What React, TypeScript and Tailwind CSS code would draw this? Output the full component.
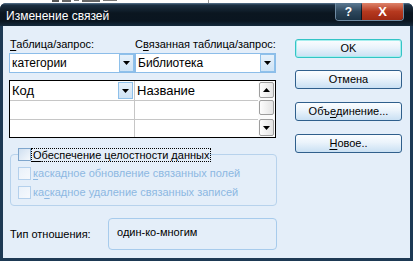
import React from 'react'

// ── small bits ──────────────────────────────────────────────────
const U: React.FC<{ children: React.ReactNode }> = ({ children }) => (
  <span className="underline underline-offset-[2px] decoration-[1px]">{children}</span>
)

const Tri: React.FC<{ up?: boolean }> = ({ up }) => (
  <svg width="7" height="4" viewBox="0 0 7 4">
    <path d={up ? 'M0 4h7L3.5 0z' : 'M0 0h7L3.5 4z'} fill="#000" />
  </svg>
)

const DropBtn: React.FC<{ className?: string }> = ({ className = '' }) => (
  <div className={`w-[15px] flex items-center justify-center bg-[linear-gradient(#e6f1fb,#cfe3f5)] border border-[#8ec0ea] ${className}`}>
    <Tri />
  </div>
)

const Combo: React.FC<{ text: string; w: string }> = ({ text, w }) => (
  <div className={`${w} h-[20px] flex bg-white border border-[#8cbde9]`}>
    <div className="flex-1 pl-[2px] text-[12px] leading-[18px]">{text}</div>
    <DropBtn />
  </div>
)

const Check: React.FC<{ disabled?: boolean }> = ({ disabled }) => (
  <div className={`w-[13px] h-[13px] shrink-0 border ${disabled
    ? 'border-[#b4d0ec] bg-[linear-gradient(135deg,#e9f1fa,#f6f9fd)]'
    : 'border-[#7fa6cd] bg-[linear-gradient(135deg,#cfdff0,#f4f8fc)]'}`} />
)

const DlgButton: React.FC<{ children: React.ReactNode; primary?: boolean; className?: string }> = ({ children, primary, className = '' }) => (
  <div className={`h-[19px] rounded-[3px] border flex items-center justify-center text-[11px] bg-[linear-gradient(#fbfdff,#eaf3fb_45%,#c9e0f3)]
    ${primary ? 'border-[#33c4c6] shadow-[inset_0_0_0_1px_#a6eeee]' : 'border-[#2f5f8c]'} ${className}`}>
    {children}
  </div>
)

const ScrollBtn: React.FC<{ children?: React.ReactNode; className?: string }> = ({ children, className = '' }) => (
  <div className={`w-[15px] flex items-center justify-center rounded-[2px] border border-[#9e9e9e] bg-[linear-gradient(90deg,#fdfdfd,#e4e4e4)] ${className}`}>
    {children}
  </div>
)

// ── dialog ──────────────────────────────────────────────────────
export default function App() {
  return (
    <div className="w-[413px] h-[261px] overflow-hidden bg-white text-black font-['Liberation_Sans',Arial,sans-serif]">
      {/* bits of the window behind, peeking above */}
      <div className="h-[3px] flex items-start gap-[3px] pl-[52px]">
        <div className="w-[7px] h-[2px] bg-[#555]" />
        <div className="w-[9px] h-[2px] bg-[#666]" />
        <div className="w-[5px] h-[1px] bg-[#777]" />
        <div className="w-[18px] h-[2px] bg-[#666]" />
        <div className="w-[14px] h-[1px] bg-[#777]" />
        <div className="ml-[88px] w-[1px] h-[3px] bg-[#999]" />
      </div>

      <div className="h-[258px] flex flex-col rounded-t-[6px] bg-[#1d3954]">
        {/* title bar */}
        <div className="h-[23px] flex items-start justify-between rounded-t-[6px] bg-[linear-gradient(#5b7893_0px,#1c3043_2px,#0b1620_10px,#0a1520_18px,#152a3c)]">
          <div className="pl-[6px] pt-[7px] text-[12px] leading-[13px] text-white">Изменение связей</div>
          <div className="mr-[9px] flex gap-[1px] rounded-b-[4px] border border-t-0 border-[#6f8ba3]">
            <div className="w-[25px] h-[17px] flex items-center justify-center rounded-bl-[3px] bg-[linear-gradient(#5c7a93,#2d475c_50%,#1c3447)] text-white font-bold text-[12px] leading-none">?</div>
            <div className="w-[41px] h-[17px] flex items-center justify-center rounded-br-[3px] bg-[linear-gradient(#de836a,#b6391f_50%,#9f2913)] text-white font-bold text-[13px] leading-none">X</div>
          </div>
        </div>

        {/* client area */}
        <div className="flex-1 mx-[3px] mb-[3px] bg-[#e4eef9] flex pl-[6px] pr-[8px]">
          {/* left column */}
          <div className="w-[268px] flex flex-col pt-[12px]">
            <div className="flex text-[11px] leading-[13px]">
              <div className="w-[126px] pl-[1px]"><U>Т</U>аблица/запрос:</div>
              <div>С<U>в</U>язанная таблица/запрос:</div>
            </div>

            <div className="flex mt-[2px]">
              <Combo text="категории" w="w-[126px]" />
              <Combo text="Библиотека" w="w-[141px]" />
            </div>

            {/* field grid */}
            <div className="mt-[7px] w-[267px] h-[58px] border border-black bg-white flex">
              <div className="flex-1 flex flex-col">
                <div className="h-[20px] flex border-b border-[#c6c6c6]">
                  <div className="w-[125px] flex border-r border-[#c6c6c6] py-[1px] pr-[1px]">
                    <div className="flex-1 pl-[2px] text-[13px] leading-[17px]">Код</div>
                    <DropBtn />
                  </div>
                  <div className="flex-1 pl-[2px] text-[13px] leading-[19px]">Название</div>
                </div>
                <div className="h-[19px] flex border-b border-[#c6c6c6]">
                  <div className="w-[125px] border-r border-[#c6c6c6]" />
                  <div className="flex-1" />
                </div>
                <div className="flex-1 flex">
                  <div className="w-[125px] border-r border-[#c6c6c6]" />
                  <div className="flex-1" />
                </div>
              </div>
              <div className="w-[17px] flex flex-col py-[1px] pl-[1px] gap-[2px] bg-[#fbfbfb]">
                <ScrollBtn className="h-[16px]"><Tri up /></ScrollBtn>
                <ScrollBtn className="h-[16px]" />
                <div className="flex-1" />
                <ScrollBtn className="h-[17px]"><Tri /></ScrollBtn>
              </div>
            </div>

            {/* referential integrity */}
            <fieldset className="mt-[10px] ml-[1px] w-[267px] border border-[#b7d2ec] rounded-[4px] px-[7px] pb-[6px]">
              <legend className="flex items-center gap-[1px]">
                <Check />
                <span className="text-[11px] leading-[12px] px-[1px] outline outline-1 outline-dotted outline-black">
                  <U>О</U>беспечение целостности данных
                </span>
              </legend>
              <div className="mt-[6px] flex items-center gap-[2px] text-[11px] leading-[13px] text-[#8db8e2]">
                <Check disabled />
                <span><U>к</U>аскадное обновление связанных полей</span>
              </div>
              <div className="mt-[6px] flex items-center gap-[2px] text-[11px] leading-[13px] text-[#8db8e2]">
                <Check disabled />
                <span>ка<U>с</U>кадное удаление связанных записей</span>
              </div>
            </fieldset>

            {/* relationship type */}
            <div className="mt-[12px] flex items-center">
              <div className="w-[99px] pl-[1px] pt-[1px] text-[11px] leading-[13px]">Тип отношения:</div>
              <div className="w-[169px] h-[32px] rounded-[4px] border border-[#a7cbec] pl-[8px] pt-[7px] text-[11px] leading-[13px]">
                один-ко-многим
              </div>
            </div>
          </div>

          {/* right buttons */}
          <div className="ml-[18px] w-[107px] flex flex-col pt-[13px]">
            <DlgButton primary>OK</DlgButton>
            <DlgButton className="mt-[12px]">Отмена</DlgButton>
            <DlgButton className="mt-[13px]">Объ<U>е</U>динение...</DlgButton>
            <DlgButton className="mt-[13px]"><U>Н</U>овое..</DlgButton>
          </div>
        </div>
      </div>
    </div>
  )
}
